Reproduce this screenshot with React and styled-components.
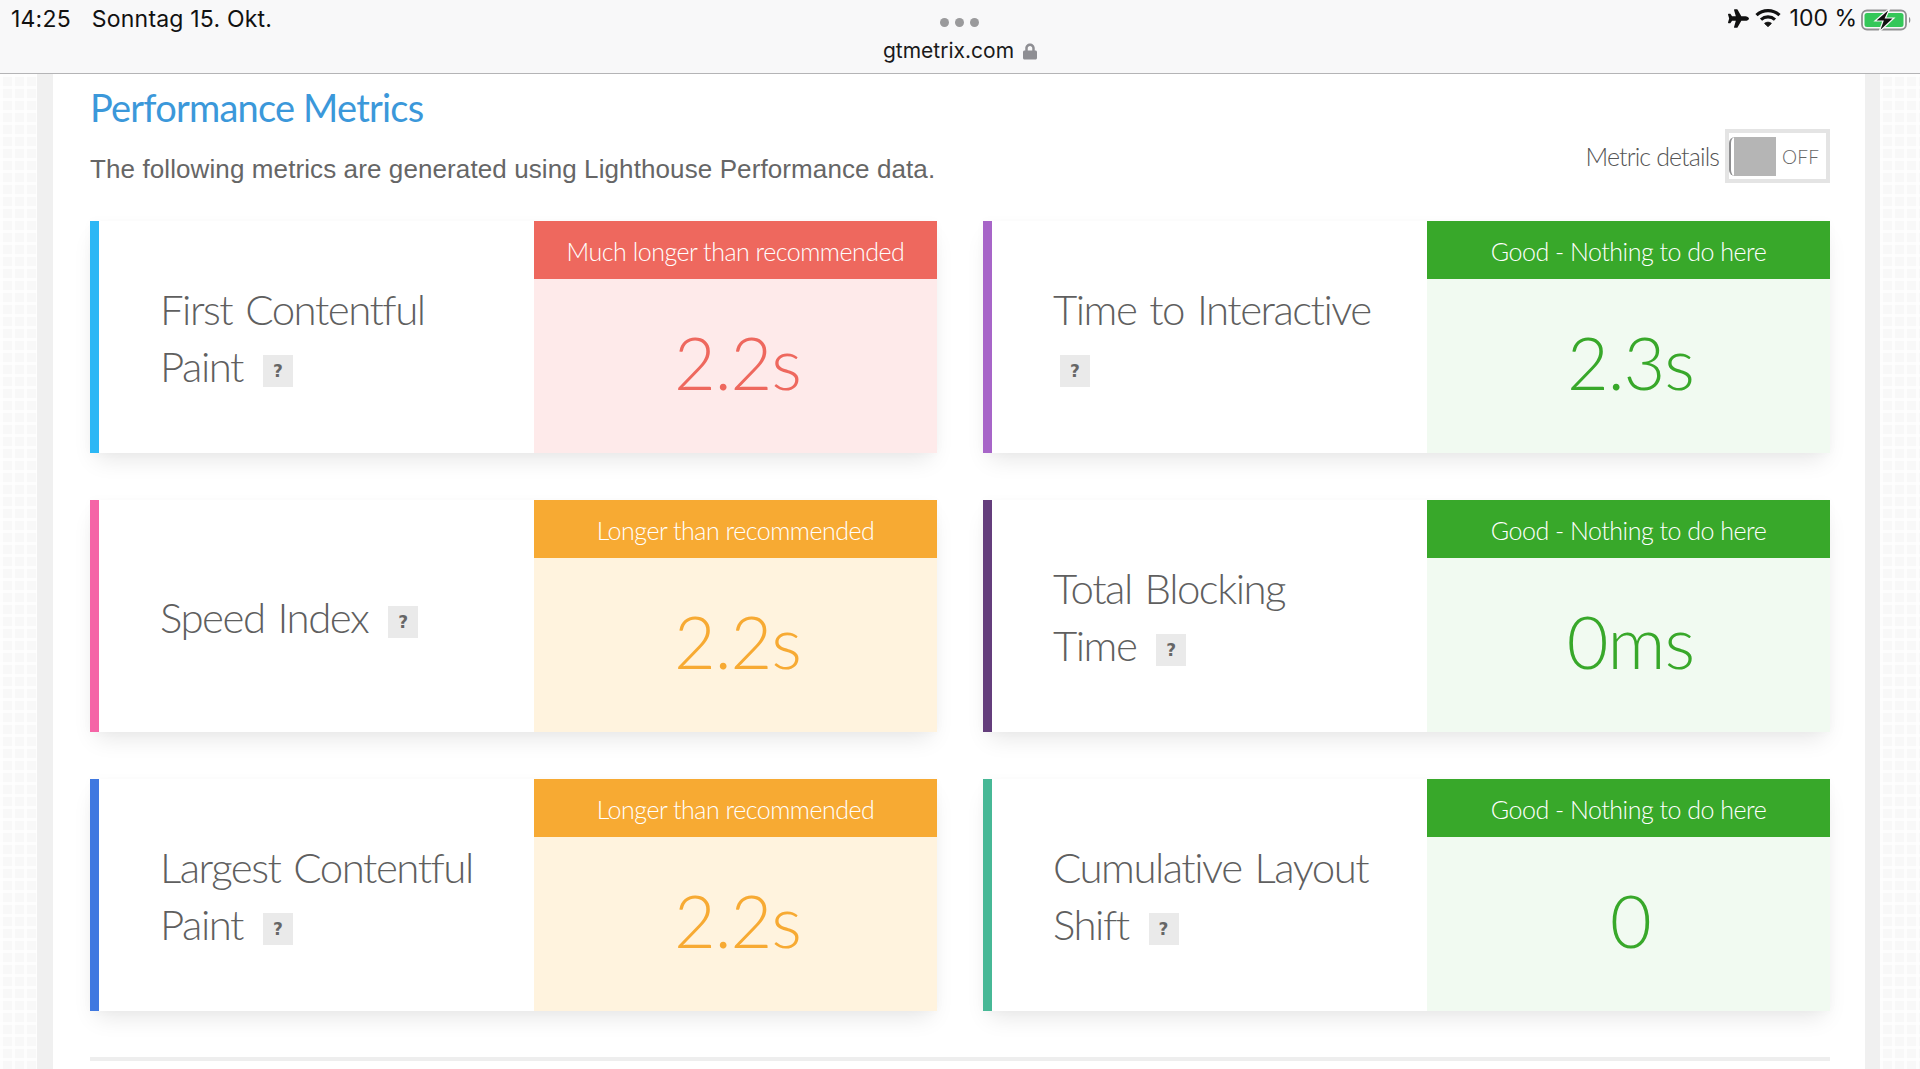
import React from "react";
import styled, { createGlobalStyle } from "styled-components";
import { FaPlane, FaLock } from "react-icons/fa";

const Global = createGlobalStyle`
  html, body { margin: 0; padding: 0; background: #fff; }
  body { width: 1920px; height: 1069px; overflow: hidden; }
  * { box-sizing: border-box; }
`;

const Screen = styled.div`
  width: 1920px;
  height: 1069px;
  display: flex;
  flex-direction: column;
  overflow: hidden;
  font-family: "Lato", "Open Sans", sans-serif;
`;

const TopBar = styled.header`
  flex: 0 0 74px;
  display: grid;
  grid-template-columns: 1fr auto 1fr;
  background: #f8f8f9;
  border-bottom: 1px solid #b4b4b6;
  font-family: "Inter", "Liberation Sans", sans-serif;
  color: #111;
`;

const StatusLeft = styled.div`
  display: flex;
  gap: 21px;
  padding: 6px 0 0 11px;
  line-height: 26px;
  font-size: 23px;
  letter-spacing: .2px;
`;

const UrlArea = styled.div`
  display: flex;
  flex-direction: column;
  align-items: center;
  padding-top: 18px;
  gap: 11px;
`;

const Dots = styled.div`
  display: flex;
  gap: 6px;
`;

const Dot = styled.span`
  width: 9px;
  height: 9px;
  border-radius: 50%;
  background: #9a9a9c;
`;

const UrlLine = styled.div`
  display: flex;
  align-items: center;
  gap: 9px;
  font-size: 21px;
  line-height: 26px;
  color: #1a1a1a;
`;

const LockIcon = styled(FaLock)`
  width: 14px;
  height: 17px;
  color: #8e8e93;
`;

const StatusRight = styled.div`
  display: flex;
  justify-content: flex-end;
  align-items: flex-start;
  gap: 9px;
  padding: 5px 7px 0 0;
  line-height: 26px;
  font-size: 23px;
`;

const PlaneIcon = styled(FaPlane)`
  width: 21px;
  height: 21px;
  margin-top: 3px;
  margin-right: -3px;
  color: #111;
`;

const IconSvg = styled.svg`
  display: block;
  margin-top: ${(p) => p.$top || 0}px;
  margin-left: ${(p) => p.$left || 0}px;
`;

const Body = styled.div`
  flex: 1;
  display: grid;
  grid-template-columns: 37px 16px 1fr 15px 40px;
  min-height: 0;
`;

const Backdrop = styled.div`
  background-color: #f8f8f8;
  background-image:
    linear-gradient(90deg, rgba(255,255,255,.75) 0 3px, transparent 3px),
    linear-gradient(rgba(255,255,255,.75) 0 3px, transparent 3px);
  background-size: 12px 12px, 12px 12px;
`;

const Gutter = styled.div`
  background: #f0f0f0;
`;

const Main = styled.main`
  background: #fff;
  padding: 16px 35px 0 37px;
`;

const SectionHead = styled.div`
  display: flex;
  justify-content: space-between;
  align-items: flex-end;
  height: 131px;
  padding-bottom: 35px;
`;

const HeadText = styled.div`
  display: flex;
  flex-direction: column;
`;

const Title = styled.h2`
  margin: 0;
  font-family: "Lato", sans-serif;
  font-weight: 400;
  font-size: 38px;
  line-height: 40px;
  letter-spacing: -.8px;
  color: #3b98da;
`;

const Subtitle = styled.p`
  margin: 25px 0 0;
  font-family: "Liberation Sans", Arial, sans-serif;
  font-size: 26px;
  line-height: 34px;
  letter-spacing: .1px;
  color: #666;
`;

const ToggleGroup = styled.div`
  display: flex;
  align-items: center;
  gap: 6px;
  margin-bottom: 3px;
  font-weight: 300;
  font-size: 25px;
  letter-spacing: -.9px;
  color: #555;
`;

const Toggle = styled.div`
  width: 105px;
  height: 54px;
  border: 4px solid #e4e4e4;
  background: #fff;
  display: flex;
  align-items: center;
`;

const ToggleEdge = styled.span`
  width: 8px;
  height: 39px;
  border-left: 2px solid #8d8d8f;
  border-radius: 6px 0 0 6px;
`;

const ToggleKnob = styled.span`
  width: 42px;
  height: 39px;
  margin-left: -3px;
  background: #b5b5b5;
`;

const ToggleLabel = styled.span`
  margin-left: 6px;
  font-size: 19px;
  letter-spacing: .3px;
  color: #666;
`;

const Grid = styled.div`
  display: grid;
  grid-template-columns: 847px 847px;
  column-gap: 46px;
  row-gap: 47px;
`;

const Card = styled.article`
  height: 232px;
  display: grid;
  grid-template-columns: 1fr 403px;
  background: #fff;
  border-left: 9px solid ${(p) => p.$accent};
  box-shadow: 0 12px 22px -6px rgba(0, 0, 0, .1), 0 0 10px rgba(0, 0, 0, .025);
`;

const NameCell = styled.div`
  display: flex;
  align-items: center;
  padding: 2px 48px 0 61px;
`;

const Name = styled.h3`
  margin: 0;
  font-weight: 300;
  font-size: 42px;
  line-height: 57px;
  letter-spacing: -1.5px;
  word-spacing: 3px;
  color: #5f5f5f;
`;

const Help = styled.span`
  display: inline-block;
  width: 30px;
  height: 32px;
  margin-left: 7px;
  background: #eaeaea;
  color: #666;
  font-family: "DejaVu Sans", sans-serif;
  font-weight: 700;
  font-size: 17px;
  line-height: 32px;
  letter-spacing: 0;
  text-align: center;
  vertical-align: 5px;
`;

const Result = styled.div`
  display: flex;
  flex-direction: column;
  background: ${(p) => p.$tint};
`;

const Verdict = styled.div`
  flex: 0 0 58px;
  display: flex;
  align-items: center;
  justify-content: center;
  padding-top: 2px;
  background: ${(p) => p.$color};
  color: #fff;
  font-weight: 300;
  font-size: 25px;
  letter-spacing: -.5px;
`;

const Value = styled.div`
  flex: 1;
  display: flex;
  align-items: center;
  justify-content: center;
  padding: 0 0 8px 4px;
  color: ${(p) => p.$color};
  font-weight: 300;
  font-size: 72px;
  letter-spacing: -1px;
`;

const Rule = styled.hr`
  margin: 46px 0 0;
  height: 4px;
  border: 0;
  background: #eeeeee;
`;

const tones = {
  bad: { color: "#ee685e", tint: "#feeaea", text: "Much longer than recommended" },
  warn: { color: "#f7aa33", tint: "#fff3de", text: "Longer than recommended" },
  good: { color: "#38a82a", tint: "#f1faf1", text: "Good - Nothing to do here" },
};

const metrics = [
  { name: "First Contentful Paint", accent: "#2cb7f5", tone: "bad", value: "2.2s" },
  { name: "Time to Interactive", accent: "#a765c8", tone: "good", value: "2.3s" },
  { name: "Speed Index", accent: "#f564a6", tone: "warn", value: "2.2s" },
  { name: "Total Blocking Time", accent: "#643e7c", tone: "good", value: "0ms" },
  { name: "Largest Contentful Paint", accent: "#3f78e0", tone: "warn", value: "2.2s" },
  { name: "Cumulative Layout Shift", accent: "#47b896", tone: "good", value: "0" },
];

const Wifi = () => (
  <IconSvg $top={3} width="26" height="20" viewBox="0 0 26 20" fill="none" stroke="#111" strokeWidth="3.2">
    <path d="M1.5 7.2C8 1 18 1 24.5 7.2" />
    <path d="M6 11.6c4-3.6 10-3.6 14 0" />
    <path d="M9.6 15.4 13 18.6l3.4-3.2c-2-1.6-4.8-1.6-6.8 0Z" fill="#111" strokeWidth="1" />
  </IconSvg>
);

const Battery = () => (
  <IconSvg $top={3} $left={-5} width="52" height="24" viewBox="0 0 52 24" fill="none">
    <rect x="1" y="2.5" width="44" height="19" rx="5" stroke="#8f8f91" strokeWidth="1.8" />
    <rect x="3.5" y="5" width="39" height="14" rx="2.5" fill="#34c759" />
    <path d="M48 9c1.800.5 1.800 5.500 0 6Z" fill="#8f8f91" />
    <path d="M29 0 14 13h8l-4 11L33 10h-8.500Z" fill="#111" stroke="#f8f8f9" strokeWidth="1.2" />
  </IconSvg>
);

export default function App() {
  return (
    <Screen>
      <Global />
      <TopBar>
        <StatusLeft>
          <span>14:25</span>
          <span>Sonntag 15. Okt.</span>
        </StatusLeft>
        <UrlArea>
          <Dots>
            <Dot />
            <Dot />
            <Dot />
          </Dots>
          <UrlLine>
            gtmetrix.com
            <LockIcon />
          </UrlLine>
        </UrlArea>
        <StatusRight>
          <PlaneIcon />
          <Wifi />
          <span>100 %</span>
          <Battery />
        </StatusRight>
      </TopBar>
      <Body>
        <Backdrop />
        <Gutter />
        <Main>
          <SectionHead>
            <HeadText>
              <Title>Performance Metrics</Title>
              <Subtitle>The following metrics are generated using Lighthouse Performance data.</Subtitle>
            </HeadText>
            <ToggleGroup>
              Metric details
              <Toggle>
                <ToggleEdge />
                <ToggleKnob />
                <ToggleLabel>OFF</ToggleLabel>
              </Toggle>
            </ToggleGroup>
          </SectionHead>
          <Grid>
            {metrics.map((m) => {
              const tone = tones[m.tone];
              return (
                <Card key={m.name} $accent={m.accent}>
                  <NameCell>
                    <Name>
                      {m.name} <Help>?</Help>
                    </Name>
                  </NameCell>
                  <Result $tint={tone.tint}>
                    <Verdict $color={tone.color}>{tone.text}</Verdict>
                    <Value $color={tone.color}>{m.value}</Value>
                  </Result>
                </Card>
              );
            })}
          </Grid>
          <Rule />
        </Main>
        <Gutter />
        <Backdrop />
      </Body>
    </Screen>
  );
}
